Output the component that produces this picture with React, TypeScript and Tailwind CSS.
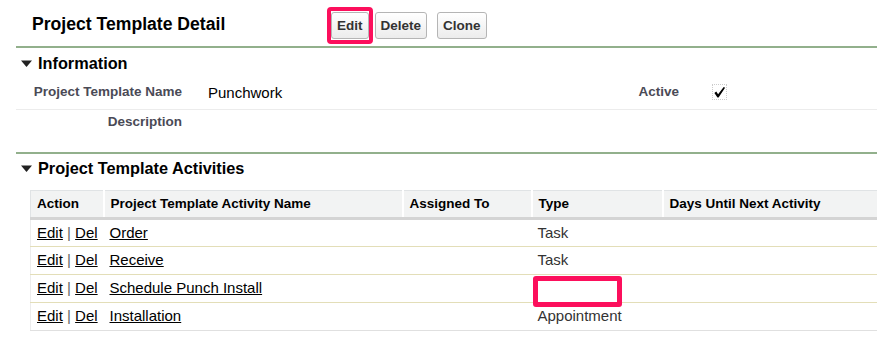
import React from 'react'

const rows = [
  { name: 'Order', type: 'Task' },
  { name: 'Receive', type: 'Task' },
  { name: 'Schedule Punch Install', type: '', mark: true },
  { name: 'Installation', type: 'Appointment' },
]

function Triangle() {
  return (
    <svg width="13" height="9" viewBox="0 0 13 9" className="shrink-0">
      <path d="M1 1.5 L12 1.5 L6.5 8 Z" fill="#222" />
    </svg>
  )
}

function Btn({ label }: { label: string }) {
  return (
    <button className="h-[27px] px-[5px] rounded-[3px] border border-[#b5b5b5] bg-gradient-to-b from-white to-[#ececec] text-[13.5px] font-bold text-[#333] leading-none">
      {label}
    </button>
  )
}

export default function App() {
  return (
    <div
      className="w-[877px] h-[349px] overflow-hidden bg-white text-[#222]"
      style={{ fontFamily: '"Liberation Sans", Arial, sans-serif' }}
    >
      {/* header */}
      <div className="ml-[16px] h-[48px] border-b-2 border-[#92b08c] flex items-center">
        <h1 className="ml-[16px] w-[295px] text-[17.6px] font-bold text-black mt-[2px]">Project Template Detail</h1>
        <div className="flex items-center mt-[5px]">
          <div className="py-[1px] border-[4px] border-[#fc0f5c] rounded-[4px] mr-[2px]">
            <Btn label="Edit" />
          </div>
          <Btn label="Delete" />
          <div className="ml-[10px]">
            <Btn label="Clone" />
          </div>
        </div>
      </div>

      {/* information */}
      <div className="flex items-center gap-[5px] ml-[20px] h-[30px]">
        <Triangle />
        <span className="text-[16.3px] font-bold text-black">Information</span>
      </div>
      <div className="ml-[16px] flex items-start h-[32px] pt-[4px] border-b border-[#ececec]">
        <div className="w-[166px] text-right text-[13.5px] font-bold text-[#4a4a56]">Project Template Name</div>
        <div className="ml-[26px] w-[393px] text-[15px] text-black">Punchwork</div>
        <div className="w-[78px] text-right text-[13.5px] font-bold text-[#4a4a56]">Active</div>
        <div className="ml-[33px] mt-[2px] w-[15px] h-[16px] border border-dotted border-[#ccc] flex items-center justify-center">
          <svg width="14" height="14" viewBox="0 0 14 14">
            <path d="M1.5 8 L3.5 6.5 L5.5 9.5 L11.5 1.5 L13 2.5 L6 13 L4.8 13 Z" fill="#000" />
          </svg>
        </div>
      </div>
      <div className="ml-[16px] h-[44px] pt-[2px] border-b-2 border-[#92b08c]">
        <div className="w-[166px] text-right text-[13.5px] font-bold text-[#4a4a56]">Description</div>
      </div>

      {/* activities */}
      <div className="flex items-center gap-[5px] ml-[20px] h-[28px]">
        <Triangle />
        <span className="text-[16.3px] font-bold text-black">Project Template Activities</span>
      </div>
      <div className="ml-[30px] mt-[8px]">
        <table className="border-collapse w-[900px] text-[15px]">
          <thead>
            <tr className="bg-[#f2f3f3] h-[28px] text-[13.5px] font-bold text-black text-left border-t border-l border-[#e0e3e5] border-b-[3px] border-b-[#d4d4d4]">
              <th className="w-[73px] pl-[6px] border-r-2 border-white">Action</th>
              <th className="w-[299px] pl-[6px] border-r-2 border-white">Project Template Activity Name</th>
              <th className="w-[129px] pl-[6px] border-r-2 border-white">Assigned To</th>
              <th className="w-[131px] pl-[6px] border-r-2 border-white">Type</th>
              <th className="pl-[6px]">Days Until Next Activity</th>
            </tr>
          </thead>
          <tbody>
            {rows.map((r, i) => (
              <tr
                key={r.name}
                className={
                  'h-[28px] border-l border-[#ececec] ' +
                  (i === rows.length - 1 ? 'border-b border-b-[#e0e0e0]' : 'border-b border-b-[#e3deb8]')
                }
              >
                <td className="pl-[6px] text-black whitespace-nowrap">
                  <a className="underline">Edit</a> <span className="text-[#666]">|</span> <a className="underline">Del</a>
                </td>
                <td className="pl-[6px] text-black">
                  <a className="underline">{r.name}</a>
                </td>
                <td></td>
                <td className="pl-[6px] text-[#333] relative">
                  {r.mark ? (
                    <div className="absolute left-[1px] top-[1px] w-[89px] h-[31px] border-[5px] border-[#fc0f5c] rounded-[3px] bg-white" />
                  ) : (
                    r.type
                  )}
                </td>
                <td></td>
              </tr>
            ))}
          </tbody>
        </table>
      </div>
    </div>
  )
}
